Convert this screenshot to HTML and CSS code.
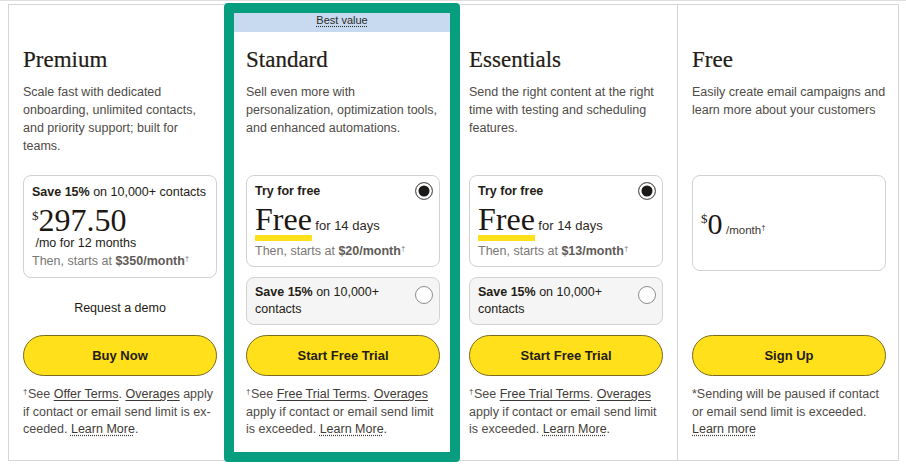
FILE: index.html
```html
<!DOCTYPE html>
<html lang="en">
<head>
<meta charset="utf-8">
<title>Plans</title>
<link rel="stylesheet" href="styles.css">
</head>
<body>
<div class="topline"></div>
<div class="plans">
  <section class="plan plan-premium">
    <h2 class="plan-title">Premium</h2>
    <p class="plan-desc">Scale fast with dedicated onboarding, unlimited contacts, and priority support; built for teams.</p>
    <div class="options">
      <div class="price-box">
        <div class="line"><b>Save 15%</b> on 10,000+ contacts</div>
        <div class="big-price"><span class="cur">$</span>297.50</div>
        <div class="line">&nbsp;/mo for 12 months</div>
        <div class="then">Then, starts at <strong>$350/month</strong><span class="dag">†</span></div>
      </div>
      <a class="demo">Request a demo</a>
    </div>
    <button class="cta">Buy Now</button>
    <p class="note"><span class="dag">†</span>See <a class="solid">Offer Terms</a>. <a class="solid">Overages</a> apply if contact or email send limit is ex&shy;ceeded. <a class="dotted">Learn More</a>.</p>
  </section>

  <section class="plan plan-standard">
    <div class="badge"><span>Best value</span></div>
    <h2 class="plan-title">Standard</h2>
    <p class="plan-desc">Sell even more with personalization, optimization tools, and enhanced automations.</p>
    <div class="options">
      <div class="try-box">
        <div class="try-head"><span>Try for free</span><span class="radio on"></span></div>
        <div class="free-row"><span class="free-word">Free</span> <span class="days">for 14 days</span></div>
        <div class="then">Then, starts at <strong>$20/month</strong><span class="dag">†</span></div>
      </div>
      <div class="save-box">
        <div class="save-text"><b>Save 15%</b> on 10,000+ contacts</div>
        <span class="radio off"></span>
      </div>
    </div>
    <button class="cta">Start Free Trial</button>
    <p class="note"><span class="dag">†</span>See <a class="solid">Free Trial Terms</a>. <a class="solid">Overages</a> apply if contact or email send limit is exceeded. <a class="dotted">Learn More</a>.</p>
  </section>

  <section class="plan plan-essentials">
    <h2 class="plan-title">Essentials</h2>
    <p class="plan-desc">Send the right content at the right time with testing and scheduling features.</p>
    <div class="options">
      <div class="try-box">
        <div class="try-head"><span>Try for free</span><span class="radio on"></span></div>
        <div class="free-row"><span class="free-word">Free</span> <span class="days">for 14 days</span></div>
        <div class="then">Then, starts at <strong>$13/month</strong><span class="dag">†</span></div>
      </div>
      <div class="save-box">
        <div class="save-text"><b>Save 15%</b> on 10,000+ contacts</div>
        <span class="radio off"></span>
      </div>
    </div>
    <button class="cta">Start Free Trial</button>
    <p class="note"><span class="dag">†</span>See <a class="solid">Free Trial Terms</a>. <a class="solid">Overages</a> apply if contact or email send limit is exceeded. <a class="dotted">Learn More</a>.</p>
  </section>

  <section class="plan plan-free">
    <h2 class="plan-title">Free</h2>
    <p class="plan-desc plan-desc-wide">Easily create email campaigns and learn more about your customers</p>
    <div class="options">
      <div class="free-box">
        <div class="free-price"><span class="cur">$</span><span class="zero">0</span> <span class="per">/month<span class="dag">†</span></span></div>
      </div>
    </div>
    <button class="cta">Sign Up</button>
    <p class="note">*Sending will be paused if contact or email send limit is exceeded. <a class="dotted">Learn more</a></p>
  </section>
</div>
</body>
</html>
```

FILE: styles.css
```css
* { box-sizing: border-box; }

html, body {
  margin: 0;
  padding: 0;
  background: #ffffff;
}

body {
  width: 906px;
  height: 464px;
  overflow: hidden;
  font-family: "Liberation Sans", Arial, sans-serif;
  font-size: 12.5px;
  color: #241c15;
}

.topline {
  height: 1px;
  background: #dedede;
}

.plans {
  display: flex;
  align-items: stretch;
  height: 459px;
  margin: 2px 0 0 8px;
}

.plan {
  display: flex;
  flex-direction: column;
  margin: 1px 0;
  padding-top: 41px;
  border-top: 1px solid #d6d6d6;
  border-bottom: 1px solid #d6d6d6;
}

.plan-premium {
  width: 216px;
  border-left: 1px solid #d6d6d6;
  padding-left: 14px;
  padding-right: 7px;
}

.plan-standard {
  width: 236px;
  margin: 0;
  padding: 0 10px 0 12px;
  border: 10px solid #079e80;
  border-radius: 4px;
}

.plan-essentials {
  width: 217px;
  padding-left: 9px;
  padding-right: 14px;
}

.plan-free {
  width: 222px;
  border-left: 1px solid #d6d6d6;
  border-right: 1px solid #d6d6d6;
  padding-left: 14px;
  padding-right: 12px;
}

.badge {
  height: 19px;
  margin: 0 -10px 14px -12px;
  padding-top: 1px;
  background: #c7daef;
  text-align: center;
  font-size: 11px;
  line-height: 12px;
  color: #2e2a27;
}

.badge span {
  text-decoration: underline dotted;
  text-underline-offset: 2px;
}

.plan-title {
  margin: 0 0 9px;
  font-family: "Liberation Serif", "Times New Roman", serif;
  font-weight: normal;
  font-size: 23px;
  line-height: 28px;
  color: #241c15;
  -webkit-text-stroke: 0.2px #241c15;
}

.plan-desc {
  margin: 0 0 20px;
  min-height: 72px;
  line-height: 18px;
  color: #4f4b48;
}

.plan-desc-wide {
  margin-right: -4px;
}

.options {
  display: flex;
  flex-direction: column;
  gap: 10px;
  height: 150px;
}

.price-box,
.try-box,
.save-box,
.free-box {
  border: 1px solid #d2d2d2;
  border-radius: 8px;
}

.price-box {
  padding: 7px 4px 7px 8px;
}

.line {
  line-height: 18px;
}

.big-price {
  height: 33px;
  padding-top: 3px;
  line-height: 1;
  font-family: "Liberation Serif", "Times New Roman", serif;
  font-size: 32px;
  color: #1d1712;
}

.cur {
  font-family: "Liberation Serif", "Times New Roman", serif;
  font-size: 13px;
  line-height: 1;
  vertical-align: 11px;
}

.then {
  line-height: 18px;
  color: #7a7775;
}

.then strong {
  color: #5f5b58;
}

.dag {
  font-size: 8px;
  line-height: 1;
  vertical-align: 4px;
  margin-right: 0.5px;
}

.demo {
  display: block;
  margin-top: 11px;
  text-align: center;
  line-height: 18px;
  color: #241c15;
}

.try-box {
  padding: 6px 6px 6px 8px;
}

.try-head {
  display: flex;
  justify-content: space-between;
  align-items: center;
  height: 18px;
  line-height: 18px;
  font-weight: bold;
}

.radio {
  flex: none;
  width: 18px;
  height: 18px;
  border-radius: 50%;
}

.radio.on {
  border: 1.5px solid #666;
  background: #1c1a18;
  box-shadow: inset 0 0 0 2.5px #ffffff;
}

.radio.off {
  margin-top: 2px;
  border: 1px solid #8d8d8d;
  background: #ffffff;
}

.free-row {
  height: 42px;
  padding-top: 3px;
  line-height: 1;
}

.free-word {
  padding-bottom: 4px;
  font-family: "Liberation Serif", "Times New Roman", serif;
  font-size: 32px;
  color: #1d1712;
  background: linear-gradient(#ffe01b, #ffe01b) left bottom / 100% 6px no-repeat;
}

.days {
  font-size: 13px;
  color: #2e2824;
}

.save-box {
  display: flex;
  align-items: flex-start;
  gap: 12px;
  padding: 6px 6px 6px 8px;
  background: #f5f5f5;
  line-height: 17px;
}

.save-text {
  flex: 1;
}

.free-box {
  display: flex;
  align-items: center;
  height: 96px;
  padding: 8px 8px 0;
}

.free-price {
  line-height: 34px;
}

.zero {
  font-family: "Liberation Serif", "Times New Roman", serif;
  font-size: 30px;
  color: #1d1712;
}

.per {
  font-size: 11.5px;
  color: #3b3531;
}

.cta {
  display: block;
  width: 100%;
  height: 41px;
  margin-top: 10px;
  border: 1px solid #7a6a22;
  border-radius: 21px;
  background: #ffe01b;
  font-family: "Liberation Sans", Arial, sans-serif;
  font-size: 13px;
  font-weight: bold;
  color: #241c15;
}

.note {
  margin: 10px 0 0;
  line-height: 17.5px;
  color: #4f4b48;
}

.note a {
  color: #3e3935;
  text-underline-offset: 2px;
}

.note a.solid {
  text-decoration: underline solid;
}

.note a.dotted {
  text-decoration: underline dotted;
}
```
